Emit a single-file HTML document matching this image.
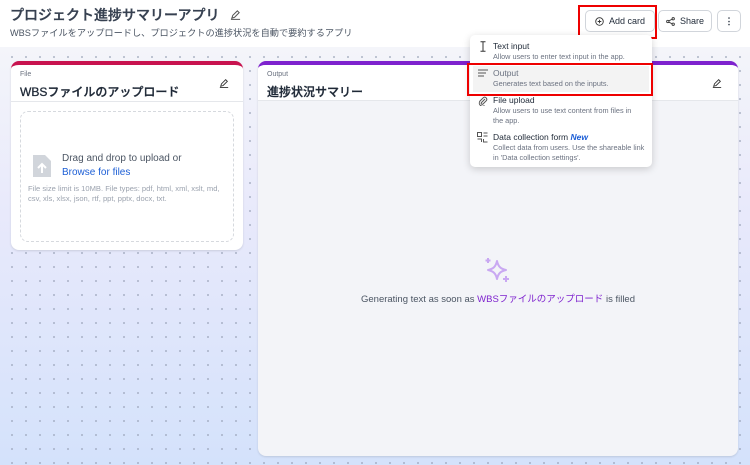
<!DOCTYPE html>
<html><head><meta charset="utf-8"><style>
*{box-sizing:border-box;margin:0;padding:0}
body{width:750px;height:465px;overflow:hidden;font-family:"Liberation Sans","Noto Sans CJK JP",sans-serif;background:#fff;position:relative;color:#374151}
.canvas{position:absolute;left:0;top:47px;width:750px;height:418px;background:linear-gradient(180deg,#f4f5fa 0%,#e8e9fb 40%,#d4e2fb 100%)}
.dots{position:absolute;inset:0;background-image:radial-gradient(circle,#9aa3b8 0.7px,transparent 1px);background-size:14px 14px;background-position:5px 3px}
.card{position:absolute;background:#fff;border-radius:8px;box-shadow:0 1px 2px rgba(0,0,0,.12);overflow:hidden}
.lbl{position:absolute;font-size:7px;color:#6b7280}
.ttl{position:absolute;font-size:12px;font-weight:500;color:#1f2937;-webkit-text-stroke:0.3px #1f2937}
.pen{position:absolute;width:10px;height:10px}
.btn{position:absolute;background:#fff;border:1px solid #d1d5db;border-radius:5px;font-size:9px;color:#1f2937;display:flex;align-items:center;justify-content:center;gap:5px}
.red{position:absolute;border:2px solid #e00;}
.menu{position:absolute;left:470px;top:35px;width:182px;height:132px;background:#fff;border-radius:5px;box-shadow:0 2px 8px rgba(0,0,0,.18)}
.it{position:absolute;left:23px;font-size:8.5px;color:#1f2937}
.it small{display:block;font-size:7.3px;color:#6b7280;line-height:9.5px;margin-top:1px}
</style></head><body>
<div style="position:absolute;left:10px;top:5px;font-size:14px;font-weight:500;-webkit-text-stroke:0.35px #374151;color:#374151">プロジェクト進捗サマリーアプリ</div>
<svg style="position:absolute;left:230px;top:9px" width="11" height="11" viewBox="0 0 12 12" fill="none" stroke="#555" stroke-width="1.1"><path d="M2 10l1-3 5-5 2 2-5 5z M1 11.3h10"/></svg>
<div style="position:absolute;left:10px;top:25px;font-size:9.2px;color:#4b5563">WBSファイルをアップロードし、プロジェクトの進捗状況を自動で要約するアプリ</div>

<div class="canvas"><div class="dots"></div></div>

<div class="card" style="left:11px;top:61px;width:232px;height:189px;border-top:4px solid #c8134f">
 <div class="lbl" style="left:9px;top:6px">File</div>
 <div class="ttl" style="left:9px;top:18px">WBSファイルのアップロード</div>
 <svg class="pen" style="left:208px;top:13px" viewBox="0 0 12 12" fill="none" stroke="#333" stroke-width="1.1"><path d="M2 10l1-3 5-5 2 2-5 5z M1 11.3h10"/></svg>
 <div style="position:absolute;left:0;right:0;top:36px;border-top:1px solid #e5e7eb"></div>
 <div style="position:absolute;left:9px;top:46px;width:214px;height:131px;border:1.3px dashed #d6d9de;border-radius:8px">
  <svg style="position:absolute;left:10px;top:41px" width="22" height="26" viewBox="0 0 22 26"><path d="M2 2h12l6 6v16H2z" fill="#d1d5db"/><path d="M11 20v-8M7 15l4-4 4 4" stroke="#fff" stroke-width="2" fill="none"/></svg>
  <div style="position:absolute;left:41px;top:41px;font-size:10px;color:#4b5563">Drag and drop to upload or</div>
  <div style="position:absolute;left:41px;top:55px;font-size:10px;color:#1d5fd6">Browse for files</div>
  <div style="position:absolute;left:7px;top:72px;width:204px;font-size:7.6px;line-height:9.5px;color:#9ca3af">File size limit is 10MB. File types: pdf, html, xml, xslt, md, csv, xls, xlsx, json, rtf, ppt, pptx, docx, txt.</div>
 </div>
</div>

<div class="card" style="left:258px;top:61px;width:480px;height:395px;border-top:4px solid #7e22ce;background:#f3f4f8">
 <div style="position:absolute;left:0;right:0;top:0;height:36px;background:#fff;border-bottom:1px solid #e5e7eb"></div>
 <div class="lbl" style="left:9px;top:6px">Output</div>
 <div class="ttl" style="left:9px;top:18px">進捗状況サマリー</div>
 <svg class="pen" style="left:454px;top:13px" viewBox="0 0 12 12" fill="none" stroke="#333" stroke-width="1.1"><path d="M2 10l1-3 5-5 2 2-5 5z M1 11.3h10"/></svg>
 <svg style="position:absolute;left:226px;top:192px" width="27" height="27" viewBox="0 0 27 27" fill="none" stroke="#c9a8f2" stroke-width="2" stroke-linejoin="round"><path d="M13 4c1.2 5.5 3.5 7.8 9 9-5.5 1.2-7.8 3.5-9 9-1.2-5.5-3.5-7.8-9-9 5.5-1.2 7.8-3.5 9-9z"/><path d="M4 1v5M1.5 3.5h5M22 19v6M19 22h6"/></svg>
 <div style="position:absolute;left:0;right:0;top:226px;text-align:center;font-size:9.5px;color:#4b5563">Generating text as soon as <span style="color:#7e22ce">WBSファイルのアップロード</span> is filled</div>
</div>

<div class="btn" style="left:585px;top:10px;width:70px;height:22px"><svg width="9" height="9" viewBox="0 0 10 10" fill="none" stroke="#333"><circle cx="5" cy="5" r="4.2"/><path d="M5 3v4M3 5h4"/></svg>Add card</div>
<div class="red" style="left:578px;top:5px;width:79px;height:34px"></div>
<div class="btn" style="left:658px;top:10px;width:54px;height:22px"><svg width="9" height="9" viewBox="0 0 10 10" fill="none" stroke="#333"><circle cx="2" cy="5" r="1.3"/><circle cx="8" cy="2" r="1.3"/><circle cx="8" cy="8" r="1.3"/><path d="M3 4.4l4-2M3 5.6l4 2"/></svg>Share</div>
<div class="btn" style="left:717px;top:10px;width:24px;height:22px;font-weight:bold;line-height:1">⋮</div>

<div class="menu">
 <svg style="position:absolute;left:9px;top:6px" width="8" height="11" viewBox="0 0 8 11" fill="none" stroke="#333"><path d="M4 1v9M1.5 .8h5M1.5 10.2h5"/></svg>
 <div class="it" style="top:6px">Text input<small>Allow users to enter text input in the app.</small></div>
 <div style="position:absolute;left:3px;top:31px;width:176px;height:26px;background:#f3f3f3"></div>
 <svg style="position:absolute;left:8px;top:34px" width="10" height="8" viewBox="0 0 10 8" stroke="#555"><path d="M0 1h10M0 4h8M0 7h6"/></svg>
 <div class="it" style="top:33px;color:#6b7280">Output<small>Generates text based on the inputs.</small></div>
 <svg style="position:absolute;left:8px;top:61px" width="10" height="10" viewBox="0 0 10 10" fill="none" stroke="#555"><path d="M7 3L3.5 6.5a1 1 0 0 0 1.5 1.5L8.5 4.5a2.2 2.2 0 0 0-3-3L2 5a3.2 3.2 0 0 0 4.5 4.5"/></svg>
 <div class="it" style="top:60px">File upload<small>Allow users to use text content from files in<br>the app.</small></div>
 <svg style="position:absolute;left:7px;top:97px" width="11" height="11" viewBox="0 0 11 11" fill="none" stroke="#555"><rect x=".5" y=".5" width="4" height="4"/><path d="M6.5 1h4M6.5 4h4M.5 7h4v3M6.5 7v3h4"/></svg>
 <div class="it" style="top:97px">Data collection form <i style="color:#1d5fd6;font-weight:bold">New</i><small>Collect data from users. Use the shareable link<br>in 'Data collection settings'.</small></div>
</div>
<div class="red" style="left:467px;top:63px;width:186px;height:33px"></div>
</body></html>
